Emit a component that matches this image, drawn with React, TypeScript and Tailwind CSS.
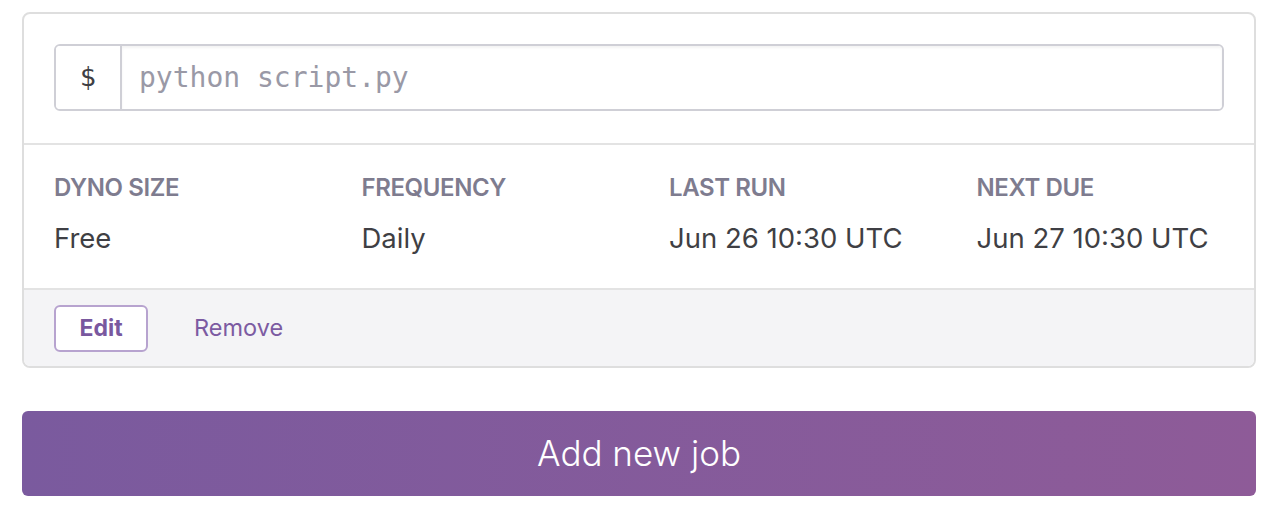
import React from 'react';

interface Stat {
  label: string;
  value: string;
}

const stats: Stat[] = [
  { label: 'Dyno Size', value: 'Free' },
  { label: 'Frequency', value: 'Daily' },
  { label: 'Last Run', value: 'Jun 26 10:30 UTC' },
  { label: 'Next Due', value: 'Jun 27 10:30 UTC' },
];

const App: React.FC = () => {
  return (
    <div className="min-h-screen bg-white px-[22px] pt-3 font-['Inter',sans-serif] antialiased">
      {/* Job card */}
      <div className="rounded-lg border-2 border-[#dedede] overflow-hidden">
        <div className="px-[30px] pt-[30px] pb-[32px] border-b-2 border-[#e3e3e3]">
          <div className="flex h-[67px] border-2 border-[#cfcfd6] rounded-md overflow-hidden">
            <div className="w-[66px] shrink-0 flex items-center justify-center border-r-2 border-[#cfcfd6] bg-white text-[27px] text-[#3f3f44] font-['DejaVu_Sans_Mono',monospace]">
              $
            </div>
            <div className="flex-1 flex items-center pl-[17px] bg-white shadow-[inset_0_2px_3px_rgba(0,0,0,0.05)] text-[28px] text-[#9a99a6] font-['DejaVu_Sans_Mono',monospace]">
              python script.py
            </div>
          </div>
        </div>

        {/* Stats */}
        <div className="grid grid-cols-4 pt-[27px] pb-[34px] border-b-2 border-[#e3e3e3]">
          {stats.map((s) => (
            <div key={s.label} className="pl-[30px]">
              <div className="uppercase text-[24px] leading-[32px] font-semibold text-[#7e7c8f] tracking-[-0.4px]">
                {s.label}
              </div>
              <div className="mt-[18px] text-[27.5px] leading-[32px] text-[#3f3f44]">{s.value}</div>
            </div>
          ))}
        </div>

        {/* Actions */}
        <div className="bg-[#f4f4f6] flex items-center gap-[46px] px-[30px] h-[76px]">
          <button className="h-[47px] w-[94px] rounded-md border-2 border-[#b7a3cf] bg-white text-[23px] font-bold text-[#79589f]">
            Edit
          </button>
          <button className="text-[23.5px] text-[#7c5ba2]">Remove</button>
        </div>
      </div>

      <button className="mt-[43px] w-full h-[85px] rounded-md bg-gradient-to-r from-[#7a5a9e] to-[#8e5b98] text-white text-[35px] font-light">
        Add new job
      </button>
    </div>
  );
};

export default App;
